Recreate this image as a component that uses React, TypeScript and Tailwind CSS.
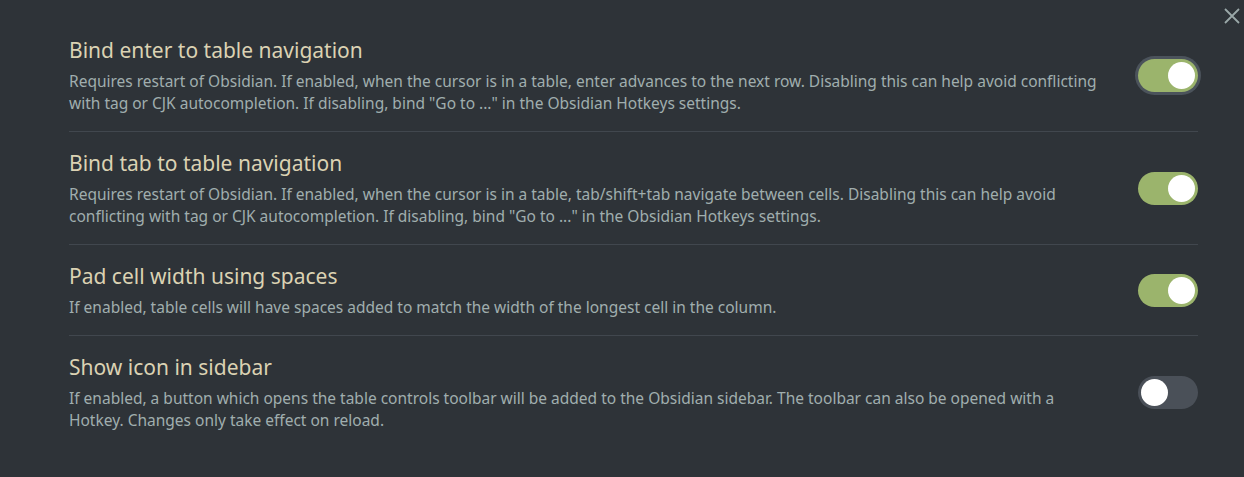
import React, { useState } from "react";

type Setting = {
	title: string;
	desc: string;
	on: boolean;
	focused?: boolean;
};

const settings: Setting[] = [
	{
		title: "Bind enter to table navigation",
		desc: 'Requires restart of Obsidian. If enabled, when the cursor is in a table, enter advances to the next row. Disabling this can help avoid conflicting with tag or CJK autocompletion. If disabling, bind "Go to ..." in the Obsidian Hotkeys settings.',
		on: true,
		focused: true,
	},
	{
		title: "Bind tab to table navigation",
		desc: 'Requires restart of Obsidian. If enabled, when the cursor is in a table, tab/shift+tab navigate between cells. Disabling this can help avoid conflicting with tag or CJK autocompletion. If disabling, bind "Go to ..." in the Obsidian Hotkeys settings.',
		on: true,
	},
	{
		title: "Pad cell width using spaces",
		desc: "If enabled, table cells will have spaces added to match the width of the longest cell in the column.",
		on: true,
	},
	{
		title: "Show icon in sidebar",
		desc: "If enabled, a button which opens the table controls toolbar will be added to the Obsidian sidebar. The toolbar can also be opened with a Hotkey. Changes only take effect on reload.",
		on: false,
	},
];

function Toggle({ on, focused }: { on: boolean; focused?: boolean }) {
	const [value, setValue] = useState(on);
	return (
		<button
			type="button"
			onClick={() => setValue(!value)}
			className={
				"relative flex h-[33px] w-[60px] shrink-0 items-center rounded-full px-[3px] " +
				(value ? "bg-[#9bb46c] justify-end " : "bg-[#4a5058] justify-start ") +
				(focused ? "ring-[3px] ring-[#4b535b]" : "")
			}
		>
			<span className="block h-[27px] w-[27px] rounded-full bg-white" />
		</button>
	);
}

export default function App() {
	return (
		<div
			className="relative min-h-[477px] w-full bg-[#2e3338] pl-[69px] pr-[46px] pt-[19px]"
			style={{ fontFamily: '"Noto Sans", "Open Sans", sans-serif' }}
		>
			<button
				type="button"
				aria-label="close"
				className="absolute right-[3px] top-[7px] text-[#9aa8a8]"
			>
				<svg width="18" height="18" viewBox="0 0 18 18" fill="none" stroke="currentColor" strokeWidth="1.8">
					<path d="M2 2L16 16M16 2L2 16" />
				</svg>
			</button>
			{settings.map((s, i) => (
				<div
					key={s.title}
					className={
						"flex items-center pt-[17px] pb-[17px] " +
						(i < settings.length - 1 ? "border-b border-[#41474e]" : "")
					}
				>
					<div className="flex-1 pr-[40px]">
						<div className="text-[21px] leading-[28px] text-[#dbd2b3]">{s.title}</div>
						<div className="mt-[6px] text-[15.5px] leading-[22px] text-[#a0aeae]">{s.desc}</div>
					</div>
					<Toggle on={s.on} focused={s.focused} />
				</div>
			))}
		</div>
	);
}
